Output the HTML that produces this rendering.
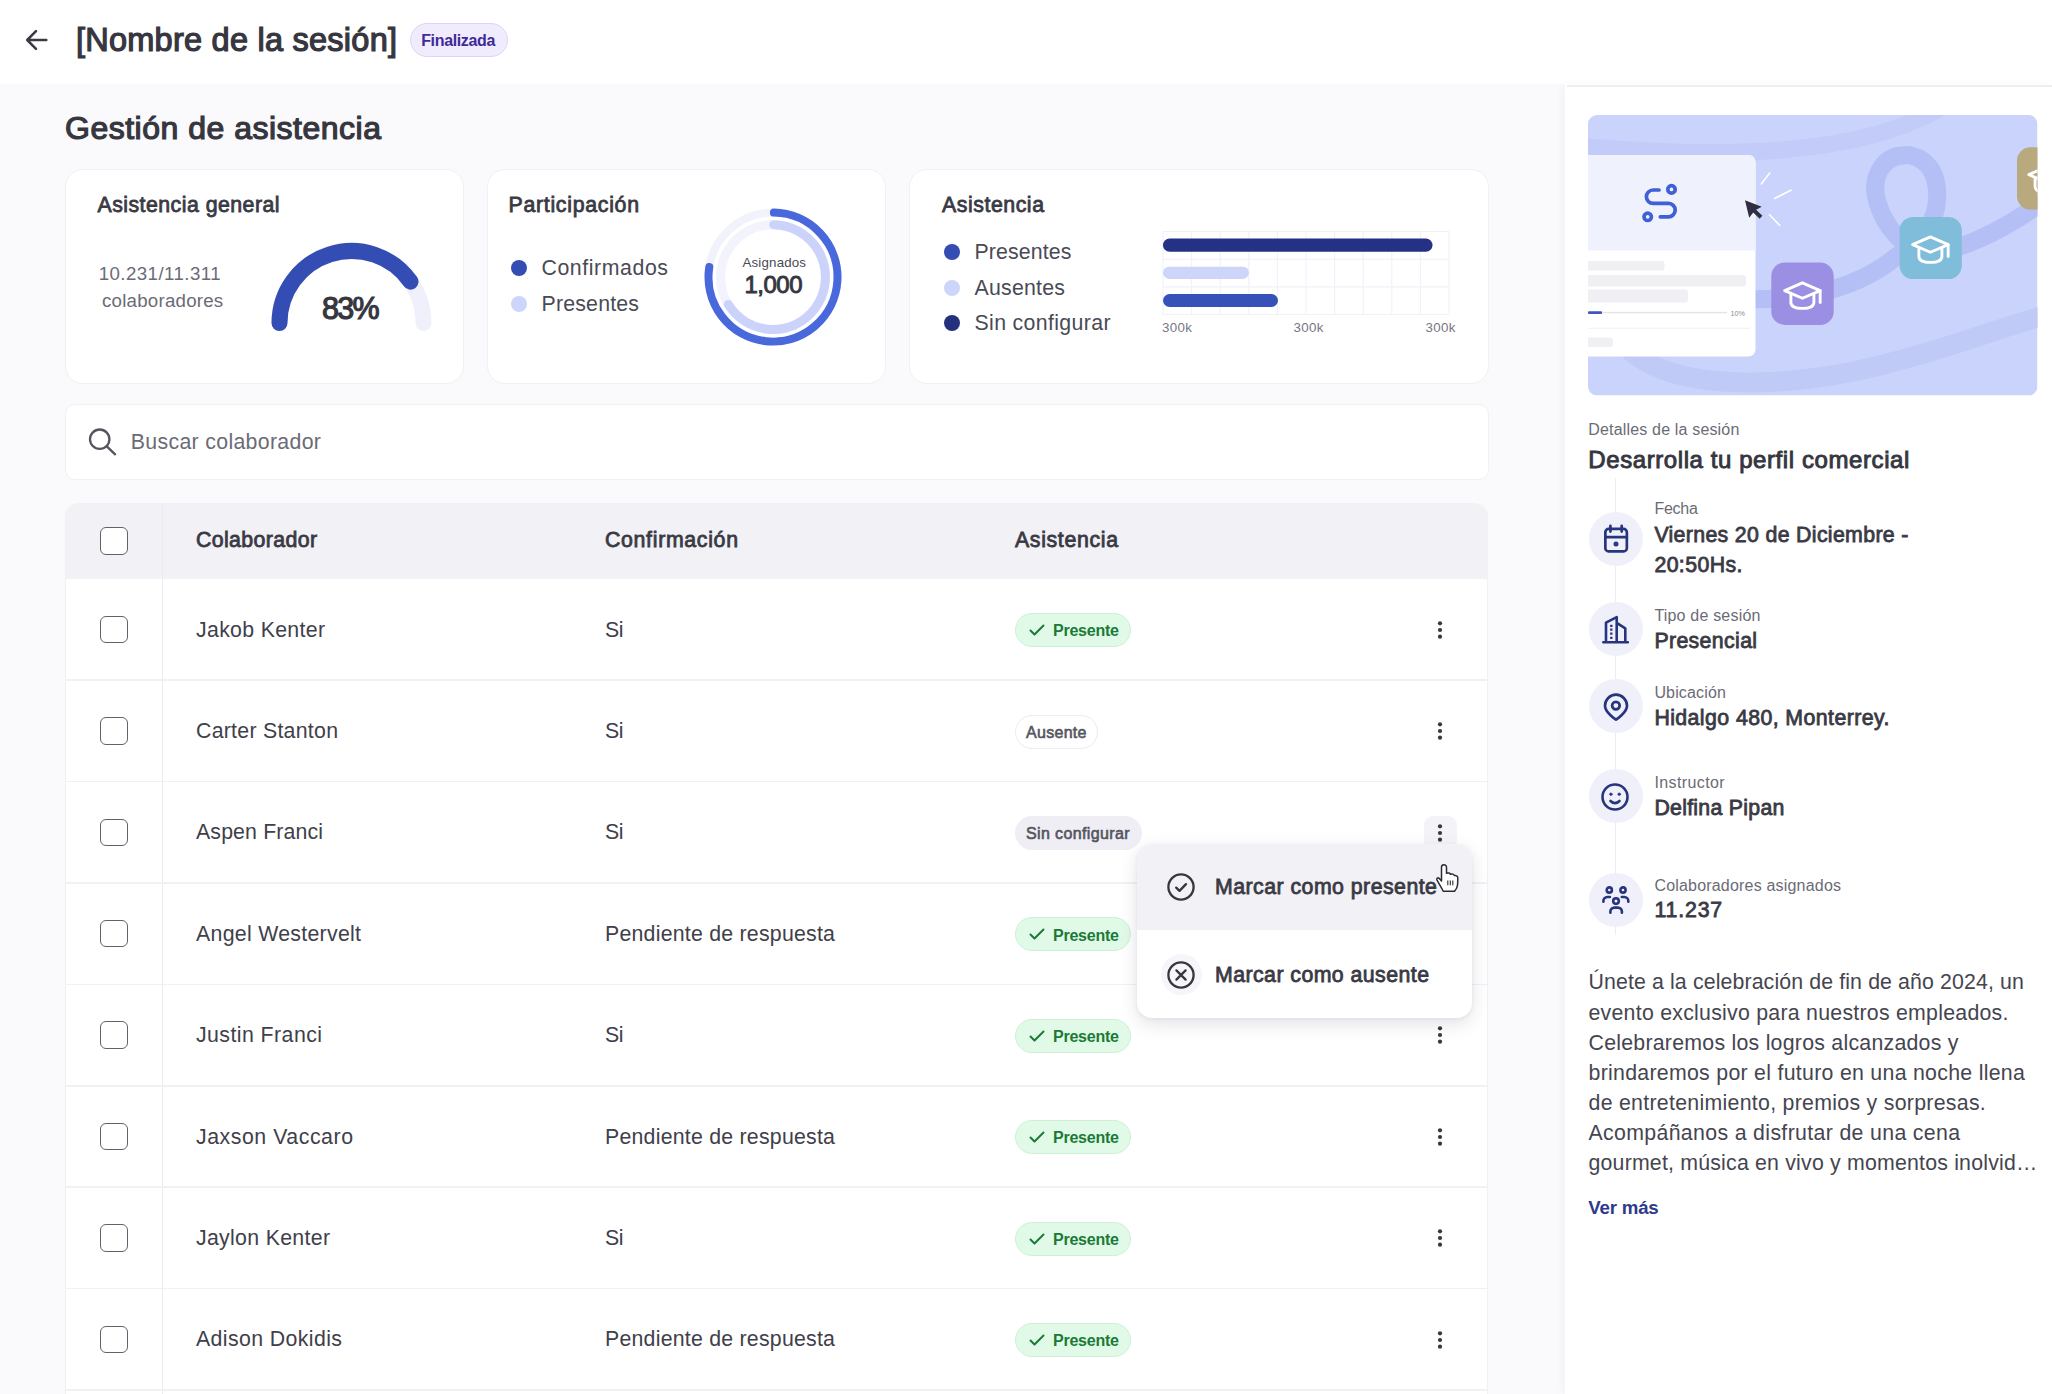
<!DOCTYPE html>
<html lang="es">
<head>
<meta charset="utf-8">
<title>Gestión de asistencia</title>
<style>
*{box-sizing:border-box;margin:0;padding:0}
html,body{width:2052px;height:1394px;overflow:hidden;background:#fafafc;font-family:"Liberation Sans",sans-serif;color:#36363f}
#app{position:relative;width:2052px;height:1394px;overflow:hidden;background:#fafafc}
.abs{position:absolute}
.t{position:absolute;white-space:nowrap;line-height:1;transform:translateY(-50%)}
.card{position:absolute;background:#fff;border:1.5px solid #f0f0f5;border-radius:18px}
.dot{position:absolute;width:16px;height:16px;border-radius:50%}
.pill{position:absolute;height:34px;border-radius:17px;border:1.5px solid transparent}
.pill.pre{background:#e1fae7;border-color:#cdf0d6}
.pill.aus{background:#fff;border-color:#ececf1}
.pill.sin{background:#eeeef4;border-color:#eeeef4}
.cb{position:absolute;left:100px;width:27.5px;height:27.5px;border:1.7px solid #62626d;border-radius:6px;background:#fff}
.rowline{position:absolute;left:65px;width:1423px;height:1.6px;background:#f1f1f5}
svg{position:absolute;overflow:visible}
.ic{position:absolute;width:54px;height:54px;border-radius:50%;background:#f0f0fb;left:1588.5px}
</style>
</head>
<body>
<div id="app">

<!-- ===== HEADER ===== -->
<div class="abs" id="header" style="left:0;top:0;width:2052px;height:84px;background:#fff"></div>
<svg style="left:24px;top:28.4px" width="26" height="24" viewBox="0 0 26 24" fill="none" stroke="#3a3a44" stroke-width="2.5" stroke-linecap="round" stroke-linejoin="round"><path d="M22.3 12H3.2M12 3.2L3.2 12l8.800 8.800"/></svg>
<span class="t" style="left:76px;top:39.56px;font-size:32.5px;color:#36363f;-webkit-text-stroke:1.23px #36363f;letter-spacing:0.243px;">[Nombre de la sesión]</span>
<div class="abs" style="left:410px;top:23.2px;width:98px;height:33.6px;border-radius:17px;background:#f0ebfd;border:1.5px solid #ddd5f6"></div>
<span class="t" style="left:421.2px;top:41.22px;font-size:16px;color:#3f2b96;font-weight:700;letter-spacing:-0.350px;">Finalizada</span>

<!-- ===== SECTION TITLE ===== -->
<span class="t" style="left:65px;top:127.74px;font-size:32px;color:#36363f;-webkit-text-stroke:1.22px #36363f;letter-spacing:0.502px;">Gestión de asistencia</span>

<!-- ===== CARDS ===== -->
<div class="card" style="left:64.8px;top:168.8px;width:399.5px;height:215.6px"></div>
<div class="card" style="left:487px;top:168.8px;width:398.7px;height:215.6px"></div>
<div class="card" style="left:909.3px;top:168.8px;width:580.2px;height:215.6px"></div>
<!--CARD1-->
<span class="t" style="left:97.5px;top:205.86px;font-size:21.3px;color:#3a3a44;-webkit-text-stroke:0.81px #3a3a44;letter-spacing:0.468px;">Asistencia general</span>
<span class="t" style="left:98.7px;top:273.84px;font-size:18.7px;color:#6b6b76;letter-spacing:0.432px;">10.231/11.311</span>
<span class="t" style="left:102px;top:300.94px;font-size:18.7px;color:#6b6b76;letter-spacing:0.232px;">colaboradores</span>
<svg style="left:263px;top:235px" width="180" height="105" viewBox="263 235 180 105" fill="none" stroke-width="16" stroke-linecap="round">
<path d="M279.5 323A72 72 0 0 1 423.5 323" stroke="#eff0fc"/>
<path d="M279.5 323A72 72 0 0 1 410.5 281.7" stroke="#344db5"/>
</svg>
<span class="t" style="left:322px;top:308.37px;font-size:30.5px;color:#36363f;-webkit-text-stroke:1.16px #36363f;letter-spacing:-1.772px;">83%</span>
<!--CARD2-->
<span class="t" style="left:508.5px;top:205.86px;font-size:21.3px;color:#3a3a44;-webkit-text-stroke:0.81px #3a3a44;letter-spacing:0.713px;">Participación</span>
<div class="dot" style="left:511.3px;top:260px;background:#344db5"></div>
<div class="dot" style="left:511.3px;top:296px;background:#cdd5fb"></div>
<span class="t" style="left:541.5px;top:268.96px;font-size:21.3px;color:#4a4a55;letter-spacing:0.575px;">Confirmados</span>
<span class="t" style="left:541.5px;top:304.96px;font-size:21.3px;color:#4a4a55;letter-spacing:0.200px;">Presentes</span>
<svg style="left:698px;top:201px" width="150" height="150" viewBox="698 201 150 150" fill="none" stroke-width="8" stroke-linecap="round">
<circle cx="773" cy="277.1" r="64.5" stroke="#f1f2fc"/>
<circle cx="773" cy="277.1" r="52.4" stroke="#f2f3fc" stroke-width="9"/>
<path d="M773.9 212.6A64.5 64.5 0 1 1 709.3 267.0" stroke="#4868dc"/>
<path d="M773.7 224.7A52.4 52.4 0 1 1 728.3 304.4" stroke="#ccd3fa" stroke-width="9"/>
</svg>
<span class="t" style="left:742.5px;top:263.30px;font-size:13.3px;color:#4a4a55;letter-spacing:0.174px;">Asignados</span>
<span class="t" style="left:744.5px;top:284.78px;font-size:24px;color:#36363f;-webkit-text-stroke:0.91px #36363f;letter-spacing:-0.515px;">1,000</span>
<!--CARD3-->
<span class="t" style="left:942px;top:205.86px;font-size:21.3px;color:#3a3a44;-webkit-text-stroke:0.81px #3a3a44;letter-spacing:0.547px;">Asistencia</span>
<div class="dot" style="left:943.7px;top:244px;background:#344db5"></div>
<div class="dot" style="left:943.7px;top:279.7px;background:#cdd5fb"></div>
<div class="dot" style="left:943.7px;top:315px;background:#24327e"></div>
<span class="t" style="left:974.5px;top:252.96px;font-size:21.3px;color:#4a4a55;letter-spacing:0.137px;">Presentes</span>
<span class="t" style="left:974.5px;top:288.66px;font-size:21.3px;color:#4a4a55;letter-spacing:0.242px;">Ausentes</span>
<span class="t" style="left:974.5px;top:323.96px;font-size:21.3px;color:#4a4a55;letter-spacing:0.352px;">Sin configurar</span>
<svg style="left:1160px;top:228px" width="295" height="92" viewBox="1160 228 295 92" fill="none">
<g stroke="#f0f1f9" stroke-width="1.1">
<path d="M1163 231.5H1449M1163 259.2H1449M1163 286.9H1449M1163 314.5H1449"/>
<path d="M1163 231.5V314.5M1191.6 231.5V314.5M1220.2 231.5V314.5M1248.8 231.5V314.5M1277.4 231.5V314.5M1306 231.5V314.5M1334.6 231.5V314.5M1363.2 231.5V314.5M1391.8 231.5V314.5M1420.4 231.5V314.5M1449 231.5V314.5"/>
</g>
<rect x="1163" y="238.6" width="269.5" height="13.2" rx="6.6" fill="#243184"/>
<rect x="1163" y="266.7" width="86" height="12.2" rx="6.1" fill="#cdd5fb"/>
<rect x="1163" y="294" width="115" height="13" rx="6.5" fill="#3652b8"/>
</svg>
<span class="t" style="left:1162px;top:328.40px;font-size:13.3px;color:#777782;letter-spacing:0.386px;">300k</span>
<span class="t" style="left:1293.5px;top:328.40px;font-size:13.3px;color:#777782;letter-spacing:0.386px;">300k</span>
<span class="t" style="left:1425.5px;top:328.40px;font-size:13.3px;color:#777782;letter-spacing:0.386px;">300k</span>

<!-- ===== SEARCH ===== -->
<div class="abs" style="left:64.8px;top:404.2px;width:1424.7px;height:75.500px;background:#fff;border:1.5px solid #f0f0f5;border-radius:10px"></div>
<!--SEARCH-->
<svg style="left:88px;top:428px" width="30" height="30" viewBox="0 0 30 30" fill="none" stroke="#55555f" stroke-width="2.3" stroke-linecap="round"><circle cx="11.7" cy="11.2" r="9.7"/><path d="M18.800 18.300l8.300 8"/></svg>
<span class="t" style="left:130.8px;top:442.96px;font-size:21.3px;color:#6b6b76;letter-spacing:0.323px;">Buscar colaborador</span>

<!-- ===== TABLE ===== -->
<div class="abs" id="table" style="left:65px;top:503px;width:1423px;height:900px;background:#fff;border-radius:14px 14px 0 0;border:1px solid #f1f1f5"></div>
<div class="abs" style="left:65px;top:503px;width:1423px;height:76px;background:#f1f1f6;border-radius:14px 14px 0 0"></div>
<!--TABLE-->
<div class="abs" style="left:161.5px;top:503px;width:1.5px;height:900px;background:#ebebf1"></div>
<div class="cb" style="top:527px"></div>
<span class="t" style="left:196px;top:541.46px;font-size:21.3px;color:#3a3a44;-webkit-text-stroke:0.81px #3a3a44;letter-spacing:0.378px;">Colaborador</span>
<span class="t" style="left:605px;top:541.46px;font-size:21.3px;color:#3a3a44;-webkit-text-stroke:0.81px #3a3a44;letter-spacing:0.683px;">Confirmación</span>
<span class="t" style="left:1015px;top:541.46px;font-size:21.3px;color:#3a3a44;-webkit-text-stroke:0.81px #3a3a44;letter-spacing:0.658px;">Asistencia</span>
<div class="rowline" style="top:679.4px"></div>
<div class="cb" style="top:615.7px"></div>
<span class="t" style="left:196px;top:630.66px;font-size:21.3px;color:#40404a;letter-spacing:0.317px;">Jakob Kenter</span>
<span class="t" style="left:605px;top:630.66px;font-size:21.3px;color:#40404a;letter-spacing:-0.439px;">Si</span>
<div class="pill pre" style="left:1015px;top:613.2px;width:115.5px"></div>
<svg style="left:1029px;top:624.2px" width="16" height="12" viewBox="0 0 16 12" fill="none" stroke="#1a7a36" stroke-width="2" stroke-linecap="round" stroke-linejoin="round"><path d="M1.5 6.5l4 4 9-9"/></svg>
<span class="t" style="left:1053px;top:631.42px;font-size:16px;color:#1a7a36;font-weight:700;letter-spacing:-0.228px;">Presente</span>
<svg style="left:1436px;top:617.7px" width="8" height="24" viewBox="0 0 8 24" fill="#36363f"><circle cx="4" cy="5.3" r="2.1"/><circle cx="4" cy="12" r="2.1"/><circle cx="4" cy="18.7" r="2.1"/></svg>
<div class="rowline" style="top:780.8px"></div>
<div class="cb" style="top:717.1px"></div>
<span class="t" style="left:196px;top:732.06px;font-size:21.3px;color:#40404a;letter-spacing:0.267px;">Carter Stanton</span>
<span class="t" style="left:605px;top:732.06px;font-size:21.3px;color:#40404a;letter-spacing:-0.439px;">Si</span>
<div class="pill aus" style="left:1015px;top:714.6px;width:82.5px"></div>
<span class="t" style="left:1026px;top:732.82px;font-size:16px;color:#55555f;-webkit-text-stroke:0.61px #55555f;letter-spacing:0.298px;">Ausente</span>
<svg style="left:1436px;top:719.1px" width="8" height="24" viewBox="0 0 8 24" fill="#36363f"><circle cx="4" cy="5.3" r="2.1"/><circle cx="4" cy="12" r="2.1"/><circle cx="4" cy="18.7" r="2.1"/></svg>
<div class="rowline" style="top:882.2px"></div>
<div class="cb" style="top:818.5px"></div>
<span class="t" style="left:196px;top:833.46px;font-size:21.3px;color:#40404a;letter-spacing:0.137px;">Aspen Franci</span>
<span class="t" style="left:605px;top:833.46px;font-size:21.3px;color:#40404a;letter-spacing:-0.439px;">Si</span>
<div class="pill sin" style="left:1015px;top:816.0px;width:126.5px"></div>
<span class="t" style="left:1026px;top:834.22px;font-size:16px;color:#55555f;-webkit-text-stroke:0.61px #55555f;letter-spacing:0.368px;">Sin configurar</span>
<div class="abs" style="left:1423.5px;top:816.0px;width:33px;height:33px;border-radius:9px;background:#f4f4f8"></div>
<svg style="left:1436px;top:820.5px" width="8" height="24" viewBox="0 0 8 24" fill="#36363f"><circle cx="4" cy="5.3" r="2.1"/><circle cx="4" cy="12" r="2.1"/><circle cx="4" cy="18.7" r="2.1"/></svg>
<div class="rowline" style="top:983.6px"></div>
<div class="cb" style="top:919.9px"></div>
<span class="t" style="left:196px;top:934.86px;font-size:21.3px;color:#40404a;letter-spacing:0.292px;">Angel Westervelt</span>
<span class="t" style="left:605px;top:934.86px;font-size:21.3px;color:#40404a;letter-spacing:0.238px;">Pendiente de respuesta</span>
<div class="pill pre" style="left:1015px;top:917.4px;width:115.5px"></div>
<svg style="left:1029px;top:928.4px" width="16" height="12" viewBox="0 0 16 12" fill="none" stroke="#1a7a36" stroke-width="2" stroke-linecap="round" stroke-linejoin="round"><path d="M1.5 6.5l4 4 9-9"/></svg>
<span class="t" style="left:1053px;top:935.62px;font-size:16px;color:#1a7a36;font-weight:700;letter-spacing:-0.228px;">Presente</span>
<svg style="left:1436px;top:921.9px" width="8" height="24" viewBox="0 0 8 24" fill="#36363f"><circle cx="4" cy="5.3" r="2.1"/><circle cx="4" cy="12" r="2.1"/><circle cx="4" cy="18.7" r="2.1"/></svg>
<div class="rowline" style="top:1085.0px"></div>
<div class="cb" style="top:1021.3px"></div>
<span class="t" style="left:196px;top:1036.26px;font-size:21.3px;color:#40404a;letter-spacing:0.438px;">Justin Franci</span>
<span class="t" style="left:605px;top:1036.26px;font-size:21.3px;color:#40404a;letter-spacing:-0.439px;">Si</span>
<div class="pill pre" style="left:1015px;top:1018.8px;width:115.5px"></div>
<svg style="left:1029px;top:1029.8px" width="16" height="12" viewBox="0 0 16 12" fill="none" stroke="#1a7a36" stroke-width="2" stroke-linecap="round" stroke-linejoin="round"><path d="M1.5 6.5l4 4 9-9"/></svg>
<span class="t" style="left:1053px;top:1037.02px;font-size:16px;color:#1a7a36;font-weight:700;letter-spacing:-0.228px;">Presente</span>
<svg style="left:1436px;top:1023.3px" width="8" height="24" viewBox="0 0 8 24" fill="#36363f"><circle cx="4" cy="5.3" r="2.1"/><circle cx="4" cy="12" r="2.1"/><circle cx="4" cy="18.7" r="2.1"/></svg>
<div class="rowline" style="top:1186.4px"></div>
<div class="cb" style="top:1122.7px"></div>
<span class="t" style="left:196px;top:1137.66px;font-size:21.3px;color:#40404a;letter-spacing:0.541px;">Jaxson Vaccaro</span>
<span class="t" style="left:605px;top:1137.66px;font-size:21.3px;color:#40404a;letter-spacing:0.238px;">Pendiente de respuesta</span>
<div class="pill pre" style="left:1015px;top:1120.2px;width:115.5px"></div>
<svg style="left:1029px;top:1131.2px" width="16" height="12" viewBox="0 0 16 12" fill="none" stroke="#1a7a36" stroke-width="2" stroke-linecap="round" stroke-linejoin="round"><path d="M1.5 6.5l4 4 9-9"/></svg>
<span class="t" style="left:1053px;top:1138.42px;font-size:16px;color:#1a7a36;font-weight:700;letter-spacing:-0.228px;">Presente</span>
<svg style="left:1436px;top:1124.7px" width="8" height="24" viewBox="0 0 8 24" fill="#36363f"><circle cx="4" cy="5.3" r="2.1"/><circle cx="4" cy="12" r="2.1"/><circle cx="4" cy="18.7" r="2.1"/></svg>
<div class="rowline" style="top:1287.8px"></div>
<div class="cb" style="top:1224.1px"></div>
<span class="t" style="left:196px;top:1239.06px;font-size:21.3px;color:#40404a;letter-spacing:0.313px;">Jaylon Kenter</span>
<span class="t" style="left:605px;top:1239.06px;font-size:21.3px;color:#40404a;letter-spacing:-0.439px;">Si</span>
<div class="pill pre" style="left:1015px;top:1221.6px;width:115.5px"></div>
<svg style="left:1029px;top:1232.6px" width="16" height="12" viewBox="0 0 16 12" fill="none" stroke="#1a7a36" stroke-width="2" stroke-linecap="round" stroke-linejoin="round"><path d="M1.5 6.5l4 4 9-9"/></svg>
<span class="t" style="left:1053px;top:1239.82px;font-size:16px;color:#1a7a36;font-weight:700;letter-spacing:-0.228px;">Presente</span>
<svg style="left:1436px;top:1226.1px" width="8" height="24" viewBox="0 0 8 24" fill="#36363f"><circle cx="4" cy="5.3" r="2.1"/><circle cx="4" cy="12" r="2.1"/><circle cx="4" cy="18.7" r="2.1"/></svg>
<div class="rowline" style="top:1389.2px"></div>
<div class="cb" style="top:1325.5px"></div>
<span class="t" style="left:196px;top:1340.46px;font-size:21.3px;color:#40404a;letter-spacing:0.393px;">Adison Dokidis</span>
<span class="t" style="left:605px;top:1340.46px;font-size:21.3px;color:#40404a;letter-spacing:0.238px;">Pendiente de respuesta</span>
<div class="pill pre" style="left:1015px;top:1323.0px;width:115.5px"></div>
<svg style="left:1029px;top:1334.0px" width="16" height="12" viewBox="0 0 16 12" fill="none" stroke="#1a7a36" stroke-width="2" stroke-linecap="round" stroke-linejoin="round"><path d="M1.5 6.5l4 4 9-9"/></svg>
<span class="t" style="left:1053px;top:1341.22px;font-size:16px;color:#1a7a36;font-weight:700;letter-spacing:-0.228px;">Presente</span>
<svg style="left:1436px;top:1327.5px" width="8" height="24" viewBox="0 0 8 24" fill="#36363f"><circle cx="4" cy="5.3" r="2.1"/><circle cx="4" cy="12" r="2.1"/><circle cx="4" cy="18.7" r="2.1"/></svg>

<!-- ===== RIGHT PANEL ===== -->
<div class="abs" id="panel" style="left:1565px;top:84px;width:487px;height:1310px;background:#fff;box-shadow:-3px 0 8px rgba(40,40,80,0.035)"></div>
<div class="abs" style="left:1567px;top:84.5px;width:485px;height:2px;background:#ededf2"></div>
<!--PANEL-->
<svg style="left:1588px;top:114.5px" width="449.5" height="280.5" viewBox="1588 114.5 449.5 280.5">
<defs><clipPath id="ilc"><rect x="1588" y="114.5" width="449.5" height="280.5" rx="9"/></clipPath></defs>
<g clip-path="url(#ilc)">
<rect x="1588" y="114.5" width="449.5" height="280.5" fill="#cad3fb"/>
<path d="M1580 146C1700 156 1850 160 1940 108" fill="none" stroke="#c3ccf9" stroke-width="17"/>
<path d="M1630 350C1680 395 1800 385 1880 365S1990 330 2045 315" fill="none" stroke="#c0caf7" stroke-width="20"/>
<path d="M1750 298.700C1795 300 1850 291 1890 261C1919 239 1940 224 1937 189.700C1935 158 1911 154 1905.600 154.700C1881 154.700 1871 179 1877 200.200C1883 222 1903 252 1930 252C1955 252 2000 232 2040 203" fill="none" stroke="#b3bff5" stroke-width="18" stroke-linecap="round"/>
<rect x="1570" y="154.5" width="185.5" height="201.5" rx="7" fill="#fff"/>
<path d="M1570 154.5h178.5a7 7 0 0 1 7 7V250H1570z" fill="#eff1fd"/>
<g fill="none" stroke="#3f60d6" stroke-width="3.700" stroke-linecap="round"><circle cx="1671.500" cy="188.900" r="3.700"/><circle cx="1647.700" cy="216.300" r="3.700"/><path d="M1659 189.500H1653.100a6.700 6.700 0 0 0 0 13.400H1668.500a6.700 6.700 0 0 1 0 13.400H1660.300"/></g>
<rect x="1580" y="260.5" width="84.5" height="9.5" rx="3" fill="#efeff4"/>
<rect x="1580" y="274.5" width="166" height="11.5" rx="3" fill="#efeff4"/>
<rect x="1580" y="289" width="108" height="13" rx="3" fill="#efeff4"/>
<rect x="1588" y="311.4" width="139" height="1.4" fill="#e3e3ea"/>
<rect x="1588" y="310.8" width="14" height="2.6" rx="1" fill="#3f55c0"/>
<text x="1730.5" y="315" font-family="Liberation Sans, sans-serif" font-size="7.2" fill="#8a8a95">10%</text>
<rect x="1588" y="327.2" width="162" height="1" fill="#f0f0f4"/>
<rect x="1580" y="337" width="33" height="9.5" rx="3" fill="#efeff4"/>
<path d="M1745 199.7l4.2 17.6 4-5.2 6.4 6.2 2.8-3-6.3-6 5.6-3z" fill="#2f2f40"/>
<g stroke="#fff" stroke-width="1.6" stroke-linecap="round"><path d="M1761.3 183.5l8.4-11M1774.5 198l16.5-8.2M1769.6 214.2l10.2 10.8"/></g>
<rect x="1771.3" y="262" width="62.4" height="62.4" rx="13.5" fill="#9b8fe3"/>
<g transform="translate(1783.200 281) scale(0.96)" fill="none" stroke="#fff" stroke-width="3" stroke-linecap="round" stroke-linejoin="round"><path d="M1.5 9.5L20 1.5l18.5 8L20 17.5z"/><path d="M8 13v8.5q0 6.5 12 6.5t12-6.5V13"/><path d="M38.5 9.5V22"/></g>
<rect x="1899.6" y="216.4" width="62.2" height="62.2" rx="13.5" fill="#7fbddb"/>
<g transform="translate(1911.200 235) scale(0.96)" fill="none" stroke="#fff" stroke-width="3" stroke-linecap="round" stroke-linejoin="round"><path d="M1.5 9.5L20 1.5l18.5 8L20 17.5z"/><path d="M8 13v8.5q0 6.5 12 6.5t12-6.5V13"/><path d="M38.5 9.5V22"/></g>
<rect x="2017" y="146.7" width="62" height="62.4" rx="13.5" fill="#b9a97f"/>
<g transform="translate(2027.400 165) scale(0.96)" fill="none" stroke="#fff" stroke-width="3" stroke-linecap="round" stroke-linejoin="round"><path d="M1.5 9.5L20 1.5l18.500 8L20 17.500z"/><path d="M8 13v8.500q0 6.500 12 6.500"/></g>
</g>
</svg>
<span class="t" style="left:1588.3px;top:430.22px;font-size:16px;color:#6b6b76;letter-spacing:0.168px;">Detalles de la sesión</span>
<span class="t" style="left:1588.3px;top:459.58px;font-size:24px;color:#36363f;-webkit-text-stroke:0.91px #36363f;letter-spacing:0.583px;">Desarrolla tu perfil comercial</span>
<div class="abs" style="left:1614.8px;top:478px;width:1.6px;height:457px;background:#ececf3"></div>
<div class="ic" style="top:511.5px"></div>
<div class="ic" style="top:602.3px"></div>
<div class="ic" style="top:678.8px"></div>
<div class="ic" style="top:769.2px"></div>
<div class="ic" style="top:873px"></div>
<svg style="left:1601.5px;top:524px" width="28" height="30" viewBox="0 0 28 30" fill="none" stroke="#26357c" stroke-linecap="round" stroke-linejoin="round" stroke-width="2.7"><rect x="3.350" y="4.950" width="21.500" height="22.400" rx="3.200"/><path d="M8.400 1.850v5.700M19.700 1.850v5.700M3.350 13.100h21.500"/><circle cx="14" cy="20.100" r="1.900" fill="#26357c" stroke-width="1.200"/></svg>
<svg style="left:1601px;top:615px" width="30" height="30" viewBox="0 0 30 30" fill="none" stroke="#26357c" stroke-linecap="round" stroke-linejoin="round" stroke-width="2.600"><path d="M2.300 27.300h24.500M5 27V7.600L15.700 2.200V27M15.700 7.900l8.600 5.400V27"/><path d="M9.150 9.650h2.300v2.300h-2.300zM9.150 13.550h2.300v2.300h-2.300zM9.150 17.550h2.300v2.300h-2.300zM9.150 21.650h2.300v2.300h-2.300z" fill="#26357c" stroke="none"/></svg>
<svg style="left:1601.500px;top:692.700px" width="28" height="31" viewBox="0 0 28 31" fill="none" stroke="#26357c" stroke-linecap="round" stroke-linejoin="round" stroke-width="2.700"><path d="M14 26.600C14 26.600 3 19.500 3 12.700a11 11 0 0 1 22 0C25 19.500 14 26.600 14 26.600z"/><circle cx="13.900" cy="12.600" r="3.800"/></svg>
<svg style="left:1600.300px;top:781.500px" width="30" height="30" viewBox="0 0 30 30" fill="none" stroke="#26357c" stroke-linecap="round" stroke-linejoin="round" stroke-width="2.600"><circle cx="15" cy="15" r="12.500"/><path d="M10.500 19q4.500 4.400 9 0"/><circle cx="10.900" cy="12.200" r="1.250" fill="#26357c" stroke-width="0.700"/><circle cx="19.200" cy="12.200" r="1.250" fill="#26357c" stroke-width="0.700"/></svg>
<svg style="left:1600.500px;top:884.500px" width="30" height="30" viewBox="0 0 30 30" fill="none" stroke="#26357c" stroke-linecap="round" stroke-linejoin="round" stroke-width="2.600"><circle cx="8.300" cy="5" r="2.600"/><circle cx="22" cy="5" r="2.600"/><circle cx="15" cy="16.100" r="2.800"/><path d="M2.400 16.700V16a4 4 0 0 1 4-4h2.500M27.300 16.700V16a4 4 0 0 0-4-4h-2.500M9.400 27.800V26.600a4 4 0 0 1 4-4h3.500a4 4 0 0 1 4 4V27.800"/></svg>
<span class="t" style="left:1654.4px;top:509.22px;font-size:16px;color:#6b6b76;letter-spacing:-0.242px;">Fecha</span>
<span class="t" style="left:1654.4px;top:536.36px;font-size:21.3px;color:#3a3a44;-webkit-text-stroke:0.81px #3a3a44;letter-spacing:0.339px;">Viernes 20 de Diciembre -</span>
<span class="t" style="left:1654.4px;top:566.36px;font-size:21.3px;color:#3a3a44;-webkit-text-stroke:0.81px #3a3a44;letter-spacing:0.393px;">20:50Hs.</span>
<span class="t" style="left:1654.4px;top:616.12px;font-size:16px;color:#6b6b76;letter-spacing:0.195px;">Tipo de sesión</span>
<span class="t" style="left:1654.4px;top:641.96px;font-size:21.3px;color:#3a3a44;-webkit-text-stroke:0.81px #3a3a44;letter-spacing:0.361px;">Presencial</span>
<span class="t" style="left:1654.4px;top:692.72px;font-size:16px;color:#6b6b76;letter-spacing:0.155px;">Ubicación</span>
<span class="t" style="left:1654.4px;top:718.76px;font-size:21.3px;color:#3a3a44;-webkit-text-stroke:0.81px #3a3a44;letter-spacing:0.421px;">Hidalgo 480, Monterrey.</span>
<span class="t" style="left:1654.4px;top:782.72px;font-size:16px;color:#6b6b76;letter-spacing:0.390px;">Instructor</span>
<span class="t" style="left:1654.4px;top:808.76px;font-size:21.3px;color:#3a3a44;-webkit-text-stroke:0.81px #3a3a44;letter-spacing:0.275px;">Delfina Pipan</span>
<span class="t" style="left:1654.4px;top:885.72px;font-size:16px;color:#6b6b76;letter-spacing:0.193px;">Colaboradores asignados</span>
<span class="t" style="left:1654.4px;top:910.96px;font-size:21.3px;color:#3a3a44;-webkit-text-stroke:0.81px #3a3a44;letter-spacing:0.846px;">11.237</span>
<span class="t" style="left:1588.5px;top:983.06px;font-size:21.3px;color:#45454f;letter-spacing:0.126px;">Únete a la celebración de fin de año 2024, un</span>
<span class="t" style="left:1588.5px;top:1013.56px;font-size:21.3px;color:#45454f;letter-spacing:0.258px;">evento exclusivo para nuestros empleados.</span>
<span class="t" style="left:1588.5px;top:1043.66px;font-size:21.3px;color:#45454f;letter-spacing:0.254px;">Celebraremos los logros alcanzados y</span>
<span class="t" style="left:1588.5px;top:1074.06px;font-size:21.3px;color:#45454f;letter-spacing:0.290px;">brindaremos por el futuro en una noche llena</span>
<span class="t" style="left:1588.5px;top:1104.06px;font-size:21.3px;color:#45454f;letter-spacing:0.291px;">de entretenimiento, premios y sorpresas.</span>
<span class="t" style="left:1588.5px;top:1134.06px;font-size:21.3px;color:#45454f;letter-spacing:0.342px;">Acompáñanos a disfrutar de una cena</span>
<span class="t" style="left:1588.5px;top:1164.06px;font-size:21.3px;color:#45454f;letter-spacing:0.201px;">gourmet, música en vivo y momentos inolvid…</span>
<span class="t" style="left:1588.3px;top:1208.34px;font-size:18.7px;color:#2d3a8c;font-weight:700;letter-spacing:-0.207px;">Ver más</span>

<!--MENU-->
<div class="abs" style="left:1137px;top:844px;width:335.3px;height:174.3px;border-radius:15px;background:#fff;box-shadow:0 6px 18px rgba(40,40,70,0.13),0 1px 4px rgba(40,40,70,0.06);overflow:hidden"><div style="height:85.6px;background:#f1f1f6"></div></div>
<div class="abs" style="left:1160.5px;top:954px;width:41px;height:41px;border-radius:50%;background:#f6f6fa"></div>
<svg style="left:1166px;top:872px" width="30" height="30" viewBox="0 0 30 30" fill="none" stroke="#36363f" stroke-width="2.3" stroke-linecap="round" stroke-linejoin="round"><circle cx="15" cy="15" r="12.6"/><path d="M10.2 15.600l3.300 3.300 6.500-6.800"/></svg>
<svg style="left:1166px;top:959.5px" width="30" height="30" viewBox="0 0 30 30" fill="none" stroke="#36363f" stroke-width="2.3" stroke-linecap="round" stroke-linejoin="round"><circle cx="15" cy="15" r="12.6"/><path d="M10.400 10.400l9.200 9.200M19.600 10.400l-9.200 9.200"/></svg>
<span class="t" style="left:1215px;top:888.16px;font-size:21.3px;color:#3a3a44;-webkit-text-stroke:0.81px #3a3a44;letter-spacing:0.469px;">Marcar como presente</span>
<span class="t" style="left:1215px;top:975.66px;font-size:21.3px;color:#3a3a44;-webkit-text-stroke:0.81px #3a3a44;letter-spacing:0.445px;">Marcar como ausente</span>
<svg style="left:1436px;top:864px" width="24" height="30" viewBox="0 0 24 30"><path d="M10.5 9.300C12 8.600 14 9 14.400 10.200C16 9.600 18 10.200 18.400 11.600C20 11.200 21.600 12.200 21.800 13.800L21.600 20.500C21.500 23 20 25.500 18.600 27.200L7.200 27.200C6 24.500 3.500 20.500 1 16.200C0.200 14.800 1.600 13.200 3 14.200L5.500 17V3.300A2.500 2.500 0 0 1 10.500 3.300Z" fill="#fff" stroke="#2b2b35" stroke-width="1.500" stroke-linejoin="round"/><path d="M11.800 16.500v4.800M14.300 16.500v4.800M16.800 16.500v4.800" stroke="#2b2b35" stroke-width="1.100"/></svg>
</div>
</body>
</html>
